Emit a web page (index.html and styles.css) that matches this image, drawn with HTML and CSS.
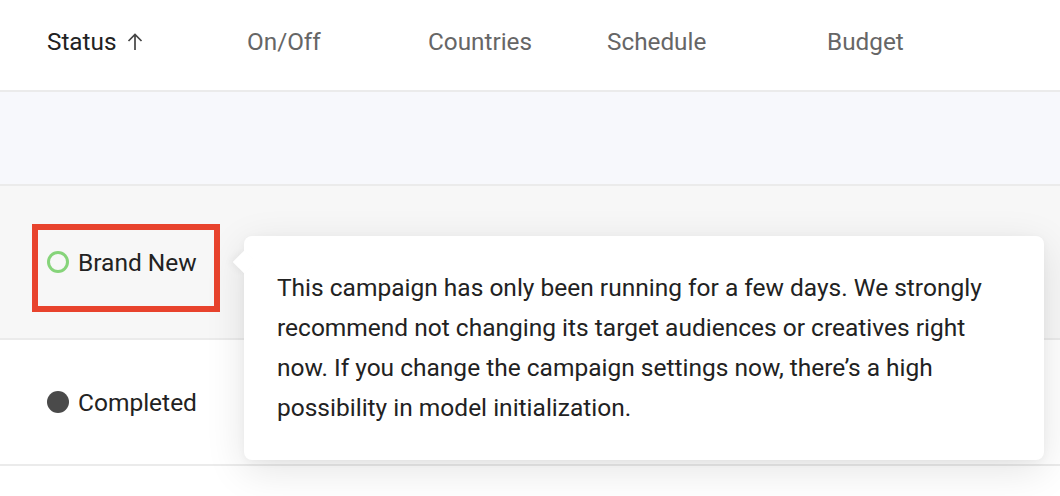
FILE: index.html
```html
<!DOCTYPE html>
<html>
<head>
<meta charset="utf-8">
<link rel="stylesheet" href="styles.css">
</head>
<body>
<div class="table">
  <div class="row head">
    <div class="cell c1 active">Status<svg class="arrow" width="18" height="20" viewBox="0 0 18 20"><path d="M9 19V3.5M2.5 10L9 3.5l6.5 6.5" fill="none" stroke="#444" stroke-width="1.7"/></svg></div>
    <div class="cell c2">On/Off</div>
    <div class="cell c3">Countries</div>
    <div class="cell c4">Schedule</div>
    <div class="cell c5">Budget</div>
  </div>
  <div class="row blank"></div>
  <div class="row hover">
    <div class="cell c1"><span class="dot ring"></span>Brand New</div>
    <div class="highlight"></div>
    <div class="tooltip">
      <span class="tip-arrow"></span>
      <p>This campaign has only been running for a few days. We strongly recommend not changing its target audiences or creatives right now. If you change the campaign settings now, there’s a high possibility in model initialization.</p>
    </div>
  </div>
  <div class="row plain">
    <div class="cell c1"><span class="dot filled"></span>Completed</div>
  </div>
</div>
</body>
</html>
```
FILE: styles.css
```css
html, body {
  margin: 0;
  padding: 0;
  background: #fff;
}
body {
  font-family: Roboto, "Liberation Sans", sans-serif;
  width: 1060px;
  height: 496px;
  overflow: hidden;
}
.table {
  display: flex;
  flex-direction: column;
}
.row {
  display: grid;
  grid-template-columns: 200px 181px 179px 220px 1fr;
  padding-left: 47px;
  border-bottom: 2px solid #ebebeb;
  align-items: center;
  position: relative;
}
.head {
  height: 90px;
  background: #fff;
}
.blank {
  height: 92px;
  background: #f7f8fc;
}
.hover {
  height: 152px;
  background: #f7f7f7;
}
.plain {
  height: 124px;
  background: #fff;
}
.cell {
  font-size: 24.5px;
  color: #222;
  display: flex;
  align-items: center;
  white-space: nowrap;
}
.head .cell {
  font-size: 24.3px;
  color: #666;
  margin-top: -8px;
}
.head .cell.active {
  color: #222;
}
.arrow {
  margin-left: 10px;
  margin-top: 0;
}
.dot {
  width: 22px;
  height: 22px;
  border-radius: 50%;
  box-sizing: border-box;
  margin-right: 9px;
  flex: none;
}
.ring {
  border: 3px solid #86d47a;
}
.filled {
  background: #4a4a4a;
}
.highlight {
  position: absolute;
  left: 32px;
  top: 38px;
  width: 188px;
  height: 88px;
  box-sizing: border-box;
  border: 6px solid #e8432d;
}
.tooltip {
  position: absolute;
  left: 244px;
  top: 50px;
  width: 800px;
  box-sizing: border-box;
  padding: 32px 33px;
  background: #fff;
  border-radius: 8px;
  box-shadow: 0 10px 40px rgba(0, 0, 0, 0.11), 0 2px 8px rgba(0, 0, 0, 0.04);
  z-index: 2;
}
.tip-arrow {
  position: absolute;
  left: -8px;
  top: 18px;
  width: 16px;
  height: 16px;
  background: #fff;
  transform: rotate(45deg);
  box-shadow: -3px 3px 6px rgba(0, 0, 0, 0.04);
}
.tooltip p {
  position: relative;
  margin: 0;
  font-size: 24.5px;
  line-height: 40px;
  color: #222;
}
```
